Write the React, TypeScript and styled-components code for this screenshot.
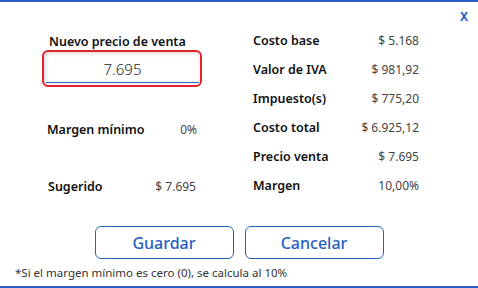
import React from 'react'
import styled, { createGlobalStyle } from 'styled-components'

const GlobalStyle = createGlobalStyle`
  html, body {
    margin: 0;
    padding: 0;
    background: #fff;
  }
  body {
    font-family: 'Noto Sans', 'Open Sans', Arial, sans-serif;
  }
`

const BLUE = '#2560c2'

const Dialog = styled.div`
  position: relative;
  box-sizing: border-box;
  width: 478px;
  height: 288px;
  border-top: 2px solid ${BLUE};
  border-bottom: 2px solid ${BLUE};
  display: flex;
  flex-direction: column;
`

const CloseButton = styled.button`
  position: absolute;
  top: 7px;
  right: 10px;
  border: none;
  background: none;
  padding: 0;
  color: ${BLUE};
  font-family: 'Noto Sans', Arial, sans-serif;
  font-weight: 700;
  font-size: 12px;
  line-height: 16px;
  cursor: pointer;
`

const Columns = styled.div`
  display: flex;
  padding: 22px 0 0 42px;
  gap: 51px;
`

const LeftColumn = styled.div`
  width: 160px;
  display: flex;
  flex-direction: column;
`

const FieldLabel = styled.div`
  padding-left: 7px;
  font-size: 12.5px;
  font-weight: 600;
  line-height: 16px;
  color: #111;
  margin-top: 10px;
`

const InputBox = styled.div`
  box-sizing: border-box;
  height: 37px;
  border: 2px solid #e4222c;
  border-radius: 6px;
  padding: 2px 1px 0 2px;
  box-shadow: inset 1px 1px 4px rgba(0, 0, 0, 0.18);
  display: flex;
`

const PriceInput = styled.input`
  flex: 1;
  min-width: 0;
  height: 29px;
  box-sizing: border-box;
  border: none;
  border-bottom: 1px solid ${BLUE};
  background: transparent;
  text-align: center;
  font-family: 'Noto Sans', Arial, sans-serif;
  font-size: 15px;
  font-weight: 300;
  color: #222;
  padding: 2px 0 0;
  outline: none;
`

const Row = styled.div<{ $gap?: number; $inset?: number }>`
  display: flex;
  justify-content: space-between;
  align-items: center;
  height: 29px;
  margin-top: ${({ $gap }) => $gap ?? 0}px;
  padding: 0 ${({ $inset }) => $inset ?? 0}px;
`

const Label = styled.span`
  font-size: 12.5px;
  font-weight: 600;
  color: #111;
`

const Value = styled.span`
  font-size: 12px;
  font-weight: 400;
  color: #444;
`

const RightColumn = styled.div`
  width: 166px;
  display: flex;
  flex-direction: column;
  padding-top: 2px;
`

const Actions = styled.div`
  display: flex;
  justify-content: center;
  gap: 11px;
  margin-top: 25px;
`

const ActionButton = styled.button`
  box-sizing: border-box;
  width: 139px;
  height: 33px;
  border: 1px solid ${BLUE};
  border-radius: 6px;
  background: #fff;
  color: ${BLUE};
  font-family: 'Noto Sans', Arial, sans-serif;
  font-size: 16px;
  font-weight: 500;
  cursor: pointer;
`

const Note = styled.p`
  margin: 6px 0 0 15px;
  font-size: 11.5px;
  line-height: 15px;
  color: #333;
`

const summary = [
  { label: 'Costo base', value: '$ 5.168' },
  { label: 'Valor de IVA', value: '$ 981,92' },
  { label: 'Impuesto(s)', value: '$ 775,20' },
  { label: 'Costo total', value: '$ 6.925,12' },
  { label: 'Precio venta', value: '$ 7.695' },
  { label: 'Margen', value: '10,00%' },
]

const App: React.FC = () => {
  return (
    <Dialog>
      <GlobalStyle />
      <CloseButton>X</CloseButton>
      <Columns>
        <LeftColumn>
          <FieldLabel>Nuevo precio de venta</FieldLabel>
          <InputBox>
            <PriceInput defaultValue="7.695" />
          </InputBox>
          <Row $gap={28} $inset={5}>
            <Label>Margen mínimo</Label>
            <Value>0%</Value>
          </Row>
          <Row $gap={28} $inset={6}>
            <Label>Sugerido</Label>
            <Value>$ 7.695</Value>
          </Row>
        </LeftColumn>
        <RightColumn>
          {summary.map((item) => (
            <Row key={item.label}>
              <Label>{item.label}</Label>
              <Value>{item.value}</Value>
            </Row>
          ))}
        </RightColumn>
      </Columns>
      <Actions>
        <ActionButton>Guardar</ActionButton>
        <ActionButton>Cancelar</ActionButton>
      </Actions>
      <Note>*Si el margen mínimo es cero (0), se calcula al 10%</Note>
    </Dialog>
  )
}

export default App
